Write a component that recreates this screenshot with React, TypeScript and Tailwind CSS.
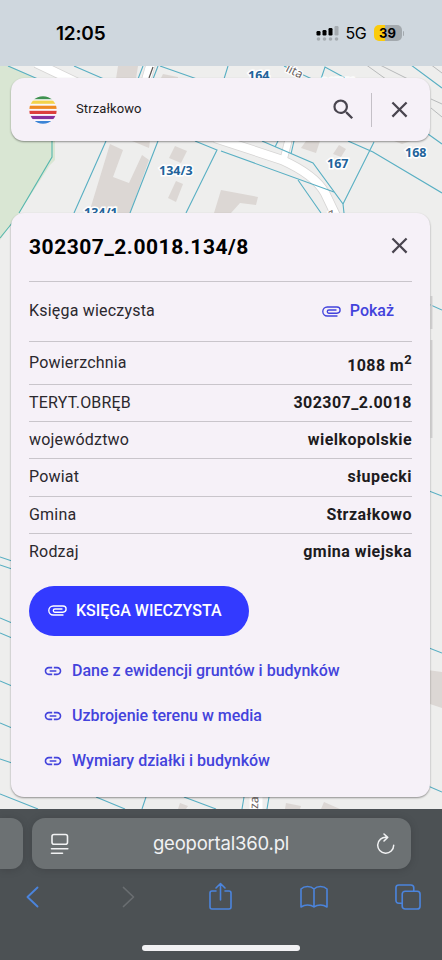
import { MdClose, MdLink, MdSearch } from 'react-icons/md';

const rows = [
  { label: 'TERYT.OBRĘB', value: '302307_2.0018' },
  { label: 'województwo', value: 'wielkopolskie' },
  { label: 'Powiat', value: 'słupecki' },
  { label: 'Gmina', value: 'Strzałkowo' },
];

const links = [
  'Dane z ewidencji gruntów i budynków',
  'Uzbrojenie terenu w media',
  'Wymiary działki i budynków',
];

const stripes = [
  { color: '#3f9150', y: 0 },
  { color: '#f3d34a', y: 4.6 },
  { color: '#ee8a22', y: 9.7 },
  { color: '#dc3f3d', y: 14.8 },
  { color: '#86309c', y: 19.9 },
  { color: '#3c84d6', y: 25 },
];

function ClipIcon() {
  return (
    <svg className="h-[11px] w-[19px]" viewBox="0 0 19 11" fill="none" stroke="currentColor" strokeWidth="1.35" strokeLinecap="round">
      <path d="M15 10H5.300A4.500 4.500 0 0 1 5.300 1H15A3.100 3.100 0 0 1 15 7.200H6.900A1.600 1.600 0 0 1 6.900 4H14" />
    </svg>
  );
}

function StatusBar() {
  return (
    <div className="flex h-[66px] shrink-0 items-center bg-[#cfd7de] pl-[56px] pr-[38px] font-['Inter'] text-black">
      <span className="mt-px text-[19px] font-semibold leading-6 tracking-[-0.2px]">12:05</span>
      <div className="ml-auto flex items-center">
        <svg className="h-[16px] w-[23px]" viewBox="0 0 23 16">
          <rect x="0.5" y="6" width="4" height="4.5" rx="1.2" />
          <rect x="6.5" y="5" width="4" height="5.5" rx="1.2" />
          <rect x="12.5" y="3" width="4" height="7.5" rx="1.2" />
          <rect x="18.5" y="1" width="4" height="9.5" rx="1.2" fill="#a5abb0" />
          {[2.5, 8.5, 14.5, 20.5].map((x) => (
            <circle key={x} cx={x} cy="14" r="1.8" fill="#a5abb0" />
          ))}
        </svg>
        <span className="ml-[6px] text-[16px] leading-6 tracking-[-0.3px]">5G</span>
        <div className="ml-[7px] flex h-[16px] w-[28px] items-center justify-center rounded-[5px] bg-linear-to-r from-[#fbcb0c] from-40% to-[#a3a9ae] to-40% text-[13px] font-bold leading-none">
          39
        </div>
        <div className="ml-[1px] h-[5px] w-[1.5px] rounded-r bg-[#a3a9ae]" />
      </div>
    </div>
  );
}

function MapBackground() {
  return (
    <svg className="absolute inset-0 h-full w-full" viewBox="0 66 442 743" fill="none">
      <rect y="66" width="442" height="743" fill="#eeeeed" />
      <path d="M0 66H10L40 80L55 140V160L50 165L19 213L0 240Z" fill="#d9e6d3" />
      {/* buildings */}
      <g fill="#dcd7d4">
        <path d="M118 66H138L136 79H116Z" />
        <path d="M163 74L178 77V80H160Z" />
        <path d="M110 144L123 150L113 177L129 183L142 155L149 160L130 213H89Z" />
        <path d="M132 141H150L149 148Z" />
        <path d="M175 146L187 151L181 163L169 158Z" />
        <path d="M176 181L183 184L176 202L168 198Z" />
        <path d="M306 141H320L316 153L301 148Z" />
        <path d="M339 145L346 149L341 157L333 154Z" />
        <path d="M221 190L258 197L256 205L240 203L231 213H214Z" />
        <path d="M394 141H411L402 144Z" />
        <path d="M398 666L442 672V708L430 704V679Z" />
        <path d="M180 803L188 806L186 809H178Z" />
        <path d="M286 803L301 806L300 809H285Z" />
        <path d="M324 802L340 809H321Z" />
      </g>
      {/* roads */}
      <g stroke="#d6d5d4" strokeWidth="10">
        <path d="M36 63L80 84M145 84L152 60M215 138L255 151L282 160Q315 175 325 193L336 216" />
        <path d="M284 158L289 138" strokeWidth="8" />
      </g>
      <g stroke="#ffffff" strokeWidth="8.5">
        <path d="M36 63L80 84M145 84L152 60M215 138L255 151L282 160Q315 175 325 193L336 216" />
        <path d="M284 158L289 138" strokeWidth="6.5" />
        <path d="M256 790V809" strokeWidth="13" />
      </g>
      <g stroke="#a9acad" strokeWidth="0.8">
        <path d="M365 64L390 82M378 64L410 80M430 64L442 73M431 99L442 104M431 108L442 117" />
      </g>
      {/* plot borders */}
      <g stroke="#58afc3" strokeWidth="1.1">
        <path d="M8 66L38 79M74 66L104 79M138 79L143 66M153 79L158 66M160 66L197 79" />
        <path d="M52 141V157L19 213M17 217L0 238" stroke="#55b7ae" />
        <path d="M106 141L74 213M158 141L130 213M195 141L217 150L186 213M221 151L334 192" />
        <path d="M262 141L313 163L343 204L344 213M298 180L321 213M278 141L275 147M294 141L291 154" />
        <path d="M343 204L374 142M348 141L373 152L442 193M428 134L442 144" />
        <path d="M224 79L228 66M321 79L325 67L347 79M284 66L312 79M411 65L442 88" />
        <path d="M424 302L442 310M424 489L442 496M424 646L442 653" />
        <path d="M0 557L12 561M0 565L12 569M0 618L12 623M0 633L12 638M0 681L12 686M0 723L12 728M0 759L12 763" />
        <path d="M0 794L38 809M96 797L125 809M142 809L146 797M184 797L216 809M242 809L244 797M267 809L269 797M428 786L442 792" />
      </g>
      {/* scroll shadows beside the card */}
      <path d="M431.500 296V329M431.500 340V438" stroke="#d2d1d2" strokeWidth="2" />
      <g className="font-['Open_Sans'] text-[12.5px] font-bold" fill="#22639a" stroke="#ffffff" strokeWidth="3" paintOrder="stroke">
        <text x="159" y="175">134/3</text>
        <text x="84" y="217">134/1</text>
        <text x="327" y="168">167</text>
        <text x="405" y="157">168</text>
        <text x="248" y="80">164</text>
        <text x="321" y="87">227/6</text>
      </g>
      <g className="font-['Noto_Sans'] text-[12px]" fill="#6b6260" stroke="#ffffff" strokeWidth="2.5" paintOrder="stroke">
        <text transform="translate(285 71) rotate(27)">lita</text>
        <text transform="translate(258 809) rotate(-88)">za</text>
        <text transform="translate(331 218) rotate(-30)">z</text>
        <path d="M149 78L153 67" stroke="#5b5552" strokeWidth="1.2" />
      </g>
    </svg>
  );
}

function SearchBar() {
  return (
    <div className="relative flex h-[63px] items-center rounded-[13px] bg-[#f6f1f8] pl-[18px] pr-[17px] shadow-[0_1px_2px_rgba(0,0,0,0.4)]">
      <svg className="h-7 w-7" viewBox="0 0 28 28">
        <clipPath id="logo-circle">
          <circle cx="14" cy="14" r="13.7" />
        </clipPath>
        <g clipPath="url(#logo-circle)">
          <rect width="28" height="28" fill="#fbf8fb" />
          {stripes.map(({ color, y }) => (
            <rect key={color} y={y} width="28" height="3.2" fill={color} />
          ))}
        </g>
      </svg>
      <span className="mb-px ml-[19px] text-[13px] tracking-[0.1px] text-[#1d1b20]">Strzałkowo</span>
      <MdSearch className="ml-auto h-[27px] w-[27px] text-[#49454f]" />
      <div className="ml-[14px] h-[34px] w-px bg-[#c4c0c7]" />
      <MdClose className="ml-[14px] h-[27px] w-[27px] text-[#49454f]" />
    </div>
  );
}

function ParcelCard() {
  return (
    <div className="relative mt-[72px] h-[584px] rounded-[13px] bg-[#f6f1f8] px-[18px] text-[16px] tracking-[0.2px] text-[#2b282e] shadow-[0_1px_2px_rgba(0,0,0,0.4)]">
      <div className="flex h-[69px] items-center justify-between border-b border-[#c9c5cb]">
        <h1 className="text-[21px] font-bold tracking-[0.52px] text-black mt-[2px]">302307_2.0018.134/8</h1>
        <MdClose className="-mr-px mb-[3px] h-[27px] w-[27px] text-[#49454f]" />
      </div>
      <div className="flex h-[60px] items-center justify-between border-b border-[#c9c5cb] pb-px pr-[18px]">
        <span>Księga wieczysta</span>
        <a className="flex items-center gap-[9px] font-medium tracking-normal text-[#4343dc]">
          <ClipIcon />
          Pokaż
        </a>
      </div>
      <div className="flex h-[43px] items-center justify-between border-b border-[#c9c5cb]">
        <span>Powierzchnia</span>
        <b className="mt-[5px] font-bold tracking-[0.4px] text-[#1d1b20]">
          1088 m<sup className="text-[13px]">2</sup>
        </b>
      </div>
      {rows.map(({ label, value }) => (
        <div key={label} className="flex h-[37.2px] items-center justify-between border-b border-[#c9c5cb]">
          <span>{label}</span>
          <b className="font-bold tracking-[0.45px] text-[#1d1b20]">{value}</b>
        </div>
      ))}
      <div className="flex h-[37px] items-center justify-between">
        <span>Rodzaj</span>
        <b className="font-bold tracking-[0.45px] text-[#1d1b20]">gmina wiejska</b>
      </div>
      <button className="mt-[15px] flex h-[50px] w-[220px] items-center gap-[9px] rounded-full bg-[#333aff] pl-[19px] font-medium tracking-normal text-white">
        <ClipIcon />
        KSIĘGA WIECZYSTA
      </button>
      <div className="mt-[13px] pl-[14px]">
        {links.map((link) => (
          <a key={link} className="flex h-[45px] items-center gap-[9px] font-medium tracking-normal text-[#4343dc]">
            <MdLink className="h-5 w-5" />
            {link}
          </a>
        ))}
      </div>
    </div>
  );
}

function BrowserBar() {
  return (
    <div className="flex h-[151px] shrink-0 flex-col bg-[#4c5154]">
      <div className="mt-[9px] flex h-[51px] gap-[9px]">
        <div className="w-[23px] rounded-r-[12px] bg-[#6c7173] shadow-[0_1px_8px_rgba(0,0,0,0.15)]" />
        <div className="flex w-[379px] items-center justify-between rounded-[13px] bg-[#6c7173] px-[15px] text-[#f1f2f3] shadow-[0_1px_8px_rgba(0,0,0,0.15)]">
          <svg className="ml-[3px] h-[22px] w-[20px]" viewBox="0 0 20 22" fill="none" stroke="currentColor" strokeWidth="1.6" strokeLinecap="round">
            <rect x="2" y="1.5" width="15.5" height="9.8" rx="2" />
            <path d="M1.5 15.7H17.8M1.5 20.3H12.5" />
          </svg>
          <span className="-ml-[4px] mt-px font-['Inter'] text-[18.5px] tracking-[-0.2px]">geoportal360.pl</span>
          <svg className="h-[22px] w-[20px]" viewBox="0 0 20 22" fill="none" stroke="currentColor" strokeWidth="1.5" strokeLinecap="round" strokeLinejoin="round">
            <path d="M10.5 4.3A8 8 0 1 0 17.7 12.3M8 1L11.7 4.4L8 8" />
          </svg>
        </div>
      </div>
      <div className="-ml-[15px] -mr-[13px] mt-[13px] grid h-[30px] grid-cols-5 place-items-center text-[#4b84dc]">
        <svg className="h-[22px] w-[13px]" viewBox="0 0 13 22" fill="none" stroke="currentColor" strokeWidth="1.9" strokeLinecap="round" strokeLinejoin="round">
          <path d="M11.5 1.5L1.5 11L11.5 20.5" />
        </svg>
        <svg className="ml-[5px] h-[22px] w-[13px] text-[#6a6e71]" viewBox="0 0 13 22" fill="none" stroke="currentColor" strokeWidth="1.7" strokeLinecap="round" strokeLinejoin="round">
          <path d="M1.5 1.5L11.5 11L1.5 20.5" />
        </svg>
        <svg className="mb-[2px] h-[28px] w-[23px]" viewBox="0 0 23 28" fill="none" stroke="currentColor" strokeWidth="1.6" strokeLinecap="round" strokeLinejoin="round">
          <path d="M7 9H3Q1 9 1 11V25Q1 27 3 27H20Q22 27 22 25V11Q22 9 20 9H16M11.5 18V1.5M7 6L11.5 1.5L16 6" />
        </svg>
        <svg className="h-[24px] w-[28px]" viewBox="0 0 28 24" fill="none" stroke="currentColor" strokeWidth="1.6" strokeLinejoin="round">
          <path d="M14 22V4Q11.500 1.500 7.500 1.500Q3.500 1.500 1 4V22Q4 20 7.500 20Q11.500 20 14 22ZM14 22V4Q16.500 1.500 20.500 1.500Q24.500 1.500 27 4V22Q24 20 20.500 20Q16.500 20 14 22Z" />
        </svg>
        <svg className="mr-px h-[26px] w-[26px]" viewBox="0 0 27 27" fill="none" stroke="currentColor" strokeWidth="1.7" strokeLinejoin="round">
          <rect x="7.500" y="7.500" width="18.500" height="18.500" rx="3" />
          <path d="M7.500 20H4Q1 20 1 17V4Q1 1 4 1H16.500Q19.500 1 19.500 4V7.500" />
        </svg>
      </div>
      <div className="ml-[142px] mt-[33px] h-[6px] w-[158px] rounded-full bg-[#f1f1f3]" />
    </div>
  );
}

export default function App() {
  return (
    <div className="flex h-[960px] w-[442px] flex-col overflow-hidden font-['Roboto',sans-serif]">
      <StatusBar />
      <main className="relative h-[743px] overflow-hidden pl-[11px] pr-[12px] pt-3">
        <MapBackground />
        <SearchBar />
        <ParcelCard />
      </main>
      <BrowserBar />
    </div>
  );
}
